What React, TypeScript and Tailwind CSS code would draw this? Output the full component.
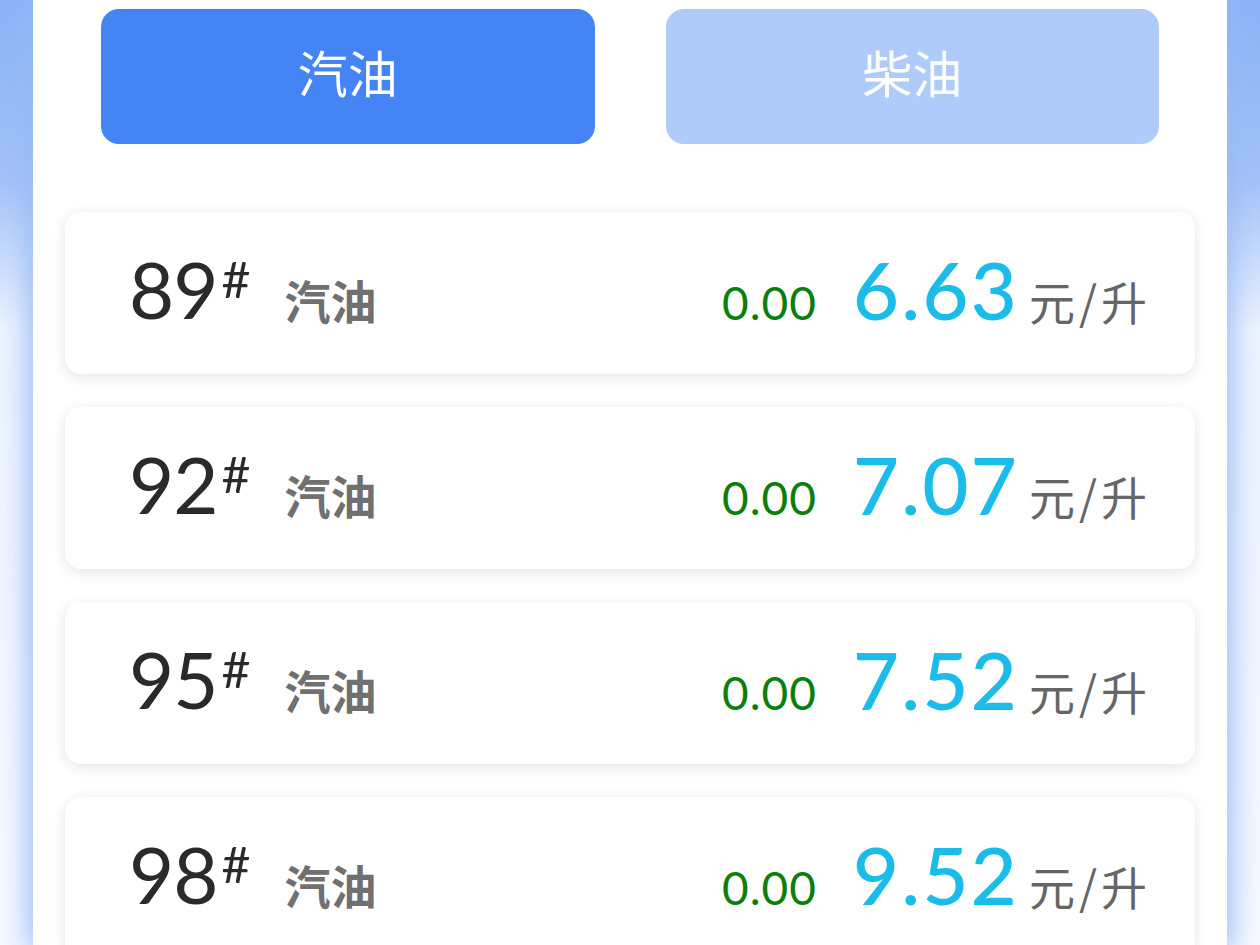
import React from "react";

const rows = [
  { grade: "89", price: "6.63" },
  { grade: "92", price: "7.07" },
  { grade: "95", price: "7.52" },
  { grade: "98", price: "9.52" },
];

const numFont = { fontFamily: "Lato, 'Noto Sans', sans-serif" };
const cjkFont = { fontFamily: "'Noto Sans CJK SC', 'Noto Sans', sans-serif" };

export default function App() {
  return (
    <div className="w-[1260px] h-[945px] overflow-hidden bg-[linear-gradient(to_bottom,#8bb2f6_0px,#a4c2f8_180px,#eef4ff_330px,#f7faff_100%)] flex justify-center">
      <div className="w-[1194px] h-full bg-white shadow-[0_0_26px_6px_rgba(150,185,245,0.9)] flex flex-col">
        <div className="flex gap-[71px] px-[68px] pt-[9px]">
          <div
            className="flex-1 h-[135px] rounded-[18px] bg-[#4484f5] flex items-center justify-center text-white text-[50px] leading-none pb-[12px]"
            style={cjkFont}
          >
            汽油
          </div>
          <div
            className="flex-1 h-[135px] rounded-[18px] bg-[#aecbfa] flex items-center justify-center text-white text-[50px] leading-none pb-[12px]"
            style={cjkFont}
          >
            柴油
          </div>
        </div>
        <div className="flex flex-col gap-[33px] px-[32px] mt-[68px]">
          {rows.map((r) => (
            <div
              key={r.grade}
              className="h-[162px] shrink-0 rounded-[16px] bg-white shadow-[0_3px_14px_rgba(0,0,0,0.11)] flex items-center pl-[64px] pr-[44px] pb-[9px]"
            >
              <div className="flex items-baseline">
                <span className="text-[78px] leading-none text-[#2a2a2a] tracking-[-1px]" style={numFont}>
                  {r.grade}
                </span>
                <span className="text-[50px] leading-none text-[#2a2a2a] self-start mt-[4px] ml-[4px]" style={numFont}>
                  #
                </span>
                <span className="text-[46px] leading-none font-bold text-[#707070] ml-[34px]" style={cjkFont}>
                  汽油
                </span>
              </div>
              <div className="flex-1" />
              <div className="flex items-baseline">
                <span className="text-[46px] leading-none text-[#0b7f0b] tracking-[1px]" style={numFont}>
                  0.00
                </span>
                <span className="text-[80px] leading-none text-[#1cbcea] font-medium ml-[36px] tracking-[2px]" style={numFont}>
                  {r.price}
                </span>
                <span className="text-[46px] leading-none text-[#666666] ml-[10px] tracking-[4px]" style={cjkFont}>
                  元/升
                </span>
              </div>
            </div>
          ))}
        </div>
      </div>
    </div>
  );
}
